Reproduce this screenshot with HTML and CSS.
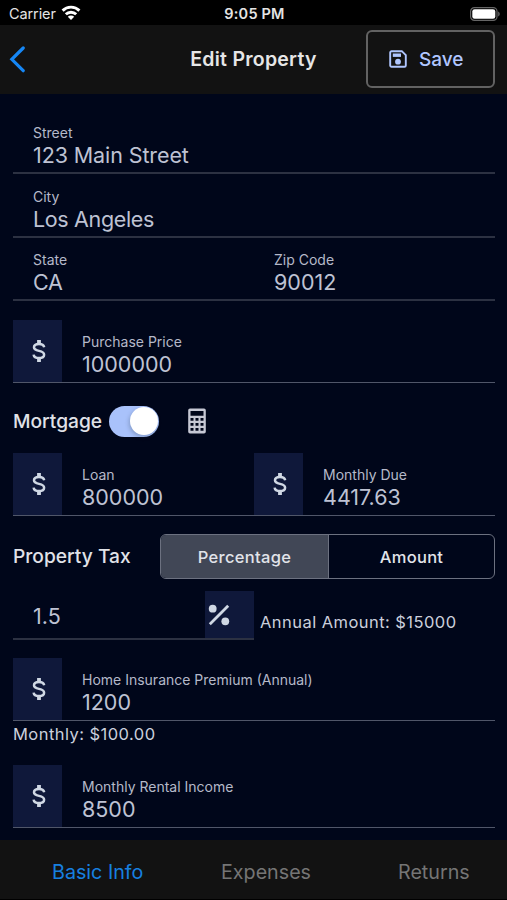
FILE: index.html
```html
<!DOCTYPE html>
<html lang="en">
<head>
<meta charset="utf-8">
<title>Edit Property</title>
<link rel="stylesheet" href="styles.css">
</head>
<body>
<svg class="defs" width="0" height="0" aria-hidden="true">
  <symbol id="dollar" viewBox="0 0 14 24">
    <path d="M12.200 8.200C11.700 6.100 9.800 5 7 5S2 6.200 2 8.300c0 2.300 2.200 3 5 3.600s5.100 1.500 5.100 3.900C12.100 18 10 19.100 7 19.100S1.900 17.900 1.600 15.600" fill="none" stroke="currentColor" stroke-width="2.500"/>
    <path d="M7 1V5M7 19v4" stroke="currentColor" stroke-width="3.800"/>
  </symbol>
</svg>
<div class="status">
  <div class="carrier"><span>Carrier</span>
    <svg width="20" height="16" viewBox="0 0 20 16"><g fill="none" stroke="#fff" stroke-width="2.900"><path d="M1.600 5.600a12 12 0 0 1 16.800 0"/><path d="M4.800 9.300a7.500 7.500 0 0 1 10.400 0"/></g><path d="M10 15l-3.200-3.200a4.500 4.500 0 0 1 6.400 0z" fill="#fff"/></svg>
  </div>
  <div class="time">9:05 PM</div>
  <svg class="battery" width="30" height="14" viewBox="0 0 30 14"><rect x=".6" y=".6" width="26.400" height="12.800" rx="3.800" fill="none" stroke="#666" stroke-width="1.200"/><rect x="2.300" y="2.200" width="23" height="9.600" rx="2.300" fill="#fff"/><path d="M28.200 4.600c2 .8 2 4 0 4.800z" fill="#666"/></svg>
</div>
<header class="header">
  <svg class="back" width="17" height="27" viewBox="0 0 17 27"><path d="M14.200 2L2.800 13.300l11.400 11.400" fill="none" stroke="#1687f5" stroke-width="3.200" stroke-linecap="round" stroke-linejoin="miter"/></svg>
  <h1 class="title">Edit Property</h1>
  <button class="save">
    <svg width="18" height="18" viewBox="0 0 18 18"><path d="M2.500 1.200h10.300l4 4v10.300a1.300 1.300 0 0 1-1.300 1.300h-13a1.300 1.300 0 0 1-1.300-1.300v-13a1.300 1.300 0 0 1 1.300-1.300z" fill="none" stroke="currentColor" stroke-width="1.900"/><rect x="3.800" y="3.500" width="8.200" height="3.400" fill="currentColor"/><circle cx="9" cy="11.700" r="2.900" fill="currentColor"/></svg>
    <span>Save</span>
  </button>
</header>
<main class="form">
  <div class="field plain"><div class="text"><label>Street</label><div class="value long">123 Main Street</div></div></div>
  <div class="field plain"><div class="text"><label>City</label><div class="value name">Los Angeles</div></div></div>
  <div class="pair state">
    <div class="field plain"><div class="text"><label>State</label><div class="value name">CA</div></div></div>
    <div class="field plain"><div class="text"><label>Zip Code</label><div class="value">90012</div></div></div>
  </div>
  <div class="field price"><div class="affix"><svg class="dollar"><use href="#dollar"/></svg></div><div class="text"><label>Purchase Price</label><div class="value">1000000</div></div></div>
  <div class="mortgage">
    <span class="heading">Mortgage</span>
    <span class="switch"><span class="knob"></span></span>
    <svg class="calc" width="18" height="26" viewBox="0 0 18 26"><path fill="currentColor" fill-rule="evenodd" d="M2 .5h14A1.800 1.800 0 0 1 17.800 2.300v21.400a1.800 1.800 0 0 1-1.800 1.800H2A1.800 1.800 0 0 1 .2 23.700V2.300A1.800 1.800 0 0 1 2 .5zM2.500 3v4.800h13V3zM2.500 10v2.800h3V10zM7.500 10v2.800h3V10zM12.500 10v2.800h3V10zM2.500 15v2.800h3V15zM7.500 15v2.800h3V15zM12.500 15v2.800h3V15zM2.500 20v2.800h3V20zM7.500 20v2.800h3V20zM12.500 20v2.800h3V20z"/></svg>
  </div>
  <div class="pair">
    <div class="field"><div class="affix"><svg class="dollar"><use href="#dollar"/></svg></div><div class="text"><label>Loan</label><div class="value">800000</div></div></div>
    <div class="field"><div class="affix"><svg class="dollar"><use href="#dollar"/></svg></div><div class="text"><label>Monthly Due</label><div class="value">4417.63</div></div></div>
  </div>
  <div class="tax">
    <span class="heading">Property Tax</span>
    <div class="segment"><div class="option on">Percentage</div><div class="option">Amount</div></div>
  </div>
  <div class="rate">
    <div class="field percent"><div class="value">1.5</div><div class="affix"><svg width="22" height="22" viewBox="0 0 22 22"><path d="M1.800 20.200L20.200 1.800" stroke="currentColor" stroke-width="2.800"/><circle cx="4.700" cy="4.700" r="3.900" fill="currentColor"/><circle cx="17.300" cy="17.300" r="3.900" fill="currentColor"/></svg></div></div>
    <span class="note annual">Annual Amount: $15000</span>
  </div>
  <div class="field insurance"><div class="affix"><svg class="dollar"><use href="#dollar"/></svg></div><div class="text"><label>Home Insurance Premium (Annual)</label><div class="value">1200</div></div></div>
  <div class="note monthly">Monthly: $100.00</div>
  <div class="field rental"><div class="affix"><svg class="dollar"><use href="#dollar"/></svg></div><div class="text"><label>Monthly Rental Income</label><div class="value">8500</div></div></div>
</main>
<nav class="tabs"><span class="tab active">Basic Info</span><span class="tab">Expenses</span><span class="tab">Returns</span></nav>
</body>
</html>
```

FILE: styles.css
```css
* { box-sizing: border-box; }
body {
  margin: 0;
  width: 507px;
  height: 900px;
  overflow: hidden;
  display: flex;
  flex-direction: column;
  background: #000;
  color: #e2e4ea;
  font-family: Inter, "Liberation Sans", sans-serif;
}
svg { display: block; flex: none; }
.defs { position: absolute; }
.status {
  height: 25px;
  flex: none;
  display: grid;
  grid-template-columns: 1fr auto 1fr;
  align-items: center;
  padding: 2px 7px 0 9px;
  font-size: 14.500px;
  color: #e4e4e4;
}
.carrier { display: flex; align-items: center; gap: 5px; letter-spacing: -.1px; }
.carrier svg { margin-top: -2px; }
.time { font-weight: 600; letter-spacing: .2px; }
.battery { justify-self: end; }
.header {
  height: 69px;
  flex: none;
  display: grid;
  grid-template-columns: 1fr auto 1fr;
  align-items: center;
  padding: 0 12px 1px 9px;
  background: #121212;
}
.title { margin: 0; padding-left: 3px; font-size: 19.500px; letter-spacing: .25px; font-weight: 600; color: #e6e6e6; }
.save {
  justify-self: end;
  width: 129px;
  height: 58px;
  display: flex;
  align-items: center;
  gap: 12px;
  padding: 0 0 0 21px;
  border: 2px solid #626262;
  border-radius: 6px;
  background: transparent;
  color: #b0c6ff;
  font: 500 19px Inter, sans-serif;
}
.form {
  height: 746px;
  flex: none;
  padding: 16px 12px 0 13px;
  background: #00061a;
}
.field {
  height: 63px;
  display: flex;
  border-bottom: 1px solid #505669;
}
.plain { height: 64px; border-bottom: 2px solid #2c3142; }
.pair { display: grid; grid-template-columns: 1fr 1fr; }
.state .plain { height: 63px; }
.text { padding: 13px 0 0 20px; }
.plain .text { padding-top: 14px; }
.state .plain .text { padding-top: 13px; }
label { display: block; font-size: 14px; line-height: 17px; color: #b5b9c9; }
.value { font-size: 21.500px; line-height: 24px; margin-top: 2px; color: #bec2d3; }
.long { letter-spacing: -.1px; }
.name { letter-spacing: -.35px; }
.affix {
  width: 49px;
  flex: none;
  display: flex;
  align-items: center;
  justify-content: center;
  background: #0f183a;
  color: #d0d8e4;
}
.dollar { width: 14px; height: 24px; margin: 0 0 0 3px; }
.price { margin-top: 19px; }
.mortgage {
  height: 70px;
  display: flex;
  align-items: center;
  padding-top: 6px;
}
.heading { font-size: 19.200px; font-weight: 500; color: #e0e2e8; }
.switch {
  width: 50px;
  height: 31px;
  margin-left: 7px;
  padding: 1.500px;
  display: flex;
  justify-content: flex-end;
  border-radius: 16px;
  background: #a9c2fb;
}
.knob { width: 28px; height: 28px; border-radius: 50%; background: #fff; box-shadow: -1px 2px 4px #2344; }
.calc { margin-left: 29px; color: #c6c8d4; }
.tax {
  display: flex;
  align-items: center;
  justify-content: space-between;
  padding-top: 18px;
}
.tax .heading { padding-bottom: 1px; }
.segment {
  width: 335px;
  height: 45px;
  display: grid;
  grid-template-columns: 168px 1fr;
  border: 1.500px solid #6c7180;
  border-radius: 6px;
  overflow: hidden;
}
.option { display: flex; align-items: center; justify-content: center; font-size: 16.500px; font-weight: 500; letter-spacing: .3px; }
.on { background: #414756; border-right: 1px solid #6c7180; }
.rate { height: 49px; margin-top: 12px; display: flex; }
.percent { width: 241px; height: 49px; justify-content: space-between; border-bottom: 2px solid #2c3142; }
.percent .value { margin: 13px 0 0 20px; }
.percent .affix { justify-content: flex-start; padding-left: 3px; }
.note { font-size: 16.500px; letter-spacing: .45px; color: #cbcfdc; line-height: 20px; }
.annual { margin: 21px 0 0 6px; }
.insurance { margin-top: 18px; }
.monthly { margin-top: 3px; }
.rental { margin-top: 21px; }
.tabs {
  height: 59px;
  flex: none;
  display: grid;
  grid-template-columns: 169px 177px auto;
  align-items: center;
  padding: 5px 0 0 52px;
  background: #121212;
}
.tab { font-size: 19.700px; color: #757575; }
.active { color: #1780e0; }
```
